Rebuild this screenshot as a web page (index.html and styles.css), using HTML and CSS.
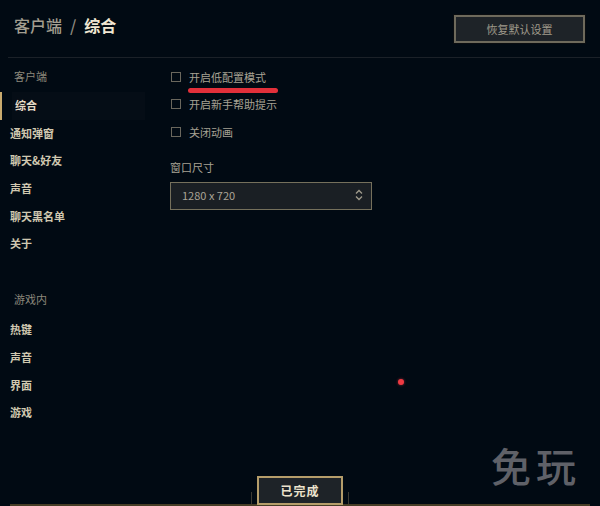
FILE: index.html
```html
<!DOCTYPE html>
<html lang="zh">
<head>
<meta charset="utf-8">
<title>设置</title>
<link rel="stylesheet" href="styles.css">
</head>
<body>
<div class="page">
  <header class="header">
    <h1 class="title"><span class="crumb">客户端</span><span class="sep">/</span><span class="current">综合</span></h1>
    <button class="btn-reset">恢复默认设置</button>
  </header>
  <div class="main">
    <nav class="sidebar">
      <div class="group-label">客户端</div>
      <ul class="nav-list">
        <li class="nav-item active">综合</li>
        <li class="nav-item">通知弹窗</li>
        <li class="nav-item">聊天&amp;好友</li>
        <li class="nav-item">声音</li>
        <li class="nav-item">聊天黑名单</li>
        <li class="nav-item">关于</li>
      </ul>
      <div class="group-label group-2">游戏内</div>
      <ul class="nav-list">
        <li class="nav-item">热键</li>
        <li class="nav-item">声音</li>
        <li class="nav-item">界面</li>
        <li class="nav-item">游戏</li>
      </ul>
    </nav>
    <section class="content">
      <label class="check-row"><span class="box"></span><span class="check-text">开启低配置模式</span></label>
      <label class="check-row"><span class="box"></span><span class="check-text">开启新手帮助提示</span></label>
      <label class="check-row"><span class="box"></span><span class="check-text">关闭动画</span></label>
      <div class="field-label">窗口尺寸</div>
      <div class="select">
        <span class="select-value">1280 x 720</span>
        <svg class="select-arrows" width="8" height="12" viewBox="0 0 8 12"><path d="M1 4.5 L4 1.5 L7 4.5 M1 7.5 L4 10.5 L7 7.5" fill="none" stroke="#a09b8c" stroke-width="1.3"/></svg>
      </div>
    </section>
  </div>
  <footer class="footer">
    <span class="tick tick-l"></span>
    <button class="btn-done">已完成</button>
    <span class="tick tick-r"></span>
  </footer>
  <div class="mark-line"></div>
  <div class="mark-dot"></div>
  <div class="watermark">免玩</div>
</div>
</body>
</html>
```

FILE: styles.css
```css
* { box-sizing: border-box; }
html, body { margin: 0; padding: 0; }
body {
  background: #010a13;
  font-family: "Noto Sans CJK SC", "Noto Sans", sans-serif;
  color: #a09b8c;
}
.page {
  position: relative;
  width: 600px;
  height: 506px;
  overflow: hidden;
  display: flex;
  flex-direction: column;
  background: #010a13;
}
.header {
  height: 58px;
  margin-left: 8px;
  border-bottom: 1px solid #1b2128;
  display: flex;
  align-items: flex-start;
  justify-content: space-between;
  padding: 0 15px 0 6px;
  flex: none;
}
.title {
  margin: 14px 0 0;
  font-size: 16px;
  line-height: 22px;
  font-weight: 500;
  display: flex;
  gap: 8px;
}
.crumb { color: #a39e90; }
.sep { color: #8f8b80; }
.current { color: #f0e6d2; font-weight: 700; }
.btn-reset {
  margin-top: 15px;
  width: 131px;
  height: 28px;
  background: #1e2328;
  border: 2px solid #6e6a5c;
  color: #a09b8c;
  font-family: inherit;
  font-size: 11px;
  padding: 0;
  outline: 1px solid #0a0d10;
}
.main {
  flex: 1;
  display: flex;
  min-height: 0;
}
.sidebar {
  width: 150px;
  flex: none;
  padding-top: 11px;
}
.group-label {
  padding-left: 14px;
  font-size: 11px;
  line-height: 14px;
  color: #8c887c;
  margin-bottom: 9px;
}
.group-2 { margin-top: 34px; margin-bottom: 10px; }
.nav-list { list-style: none; margin: 0; padding: 0; }
.nav-item {
  height: 27.7px;
  line-height: 27.7px;
  padding-left: 10px;
  font-size: 11px;
  font-weight: 700;
  color: #d0c8b0;
  position: relative;
}
.nav-item.active {
  margin-left: 12px;
  margin-right: 5px;
  padding-left: 3px;
  background: #050d16;
  color: #e6dcc6;
}
.nav-item.active::before {
  content: "";
  position: absolute;
  left: -12px;
  top: 0;
  width: 2px;
  height: 100%;
  background: #c8aa6e;
}
.content {
  padding-left: 20px;
  padding-top: 5px;
  flex: 1;
}
.check-row {
  display: flex;
  align-items: center;
  gap: 8px;
  height: 27.5px;
  padding-left: 1px;
}
.box {
  width: 10px;
  height: 10px;
  border: 1px solid #6a675d;
}
.check-text {
  font-size: 11px;
  color: #a7a294;
}
.field-label {
  margin-top: 14px;
  font-size: 11px;
  line-height: 14px;
  color: #a7a294;
}
.select {
  margin-top: 8px;
  width: 202px;
  height: 28px;
  border: 1px solid #75705c;
  background: #1a1f24;
  display: flex;
  align-items: center;
  justify-content: space-between;
  padding: 0 8px 1px 11px;
}
.select-value { font-size: 11px; color: #aaa597; }
.footer {
  height: 34px;
  flex: none;
  margin: 0 10px 0 10px;
  border-bottom: 2px solid #463d26;
  display: flex;
  justify-content: center;
  align-items: flex-end;
}
.btn-done {
  width: 86px;
  height: 29px;
  margin-bottom: -1px;
  background: #1e2328;
  border: 2px solid #b59d6a;
  color: #ece2cc;
  font-family: inherit;
  font-weight: 700;
  font-size: 12px;
  letter-spacing: 1px;
  padding: 0;
  position: relative;
  z-index: 1;
}
.tick {
  width: 1px;
  height: 12px;
  background: #3c3a33;
  margin: 0 5px;
}
.mark-line {
  position: absolute;
  left: 188px;
  top: 88px;
  width: 90px;
  height: 5px;
  border-radius: 3px;
  background: #e2303a;
}
.mark-dot {
  position: absolute;
  left: 398px;
  top: 379px;
  width: 6px;
  height: 6px;
  border-radius: 50%;
  background: #ee3a42;
  box-shadow: 0 0 3px rgba(238, 58, 66, 0.6);
}
.watermark {
  position: absolute;
  left: 491px;
  top: 439px;
  font-size: 40px;
  line-height: 52px;
  letter-spacing: 5px;
  font-weight: 500;
  color: #5f6168;
  font-family: "Noto Sans CJK SC", sans-serif;
}
```
